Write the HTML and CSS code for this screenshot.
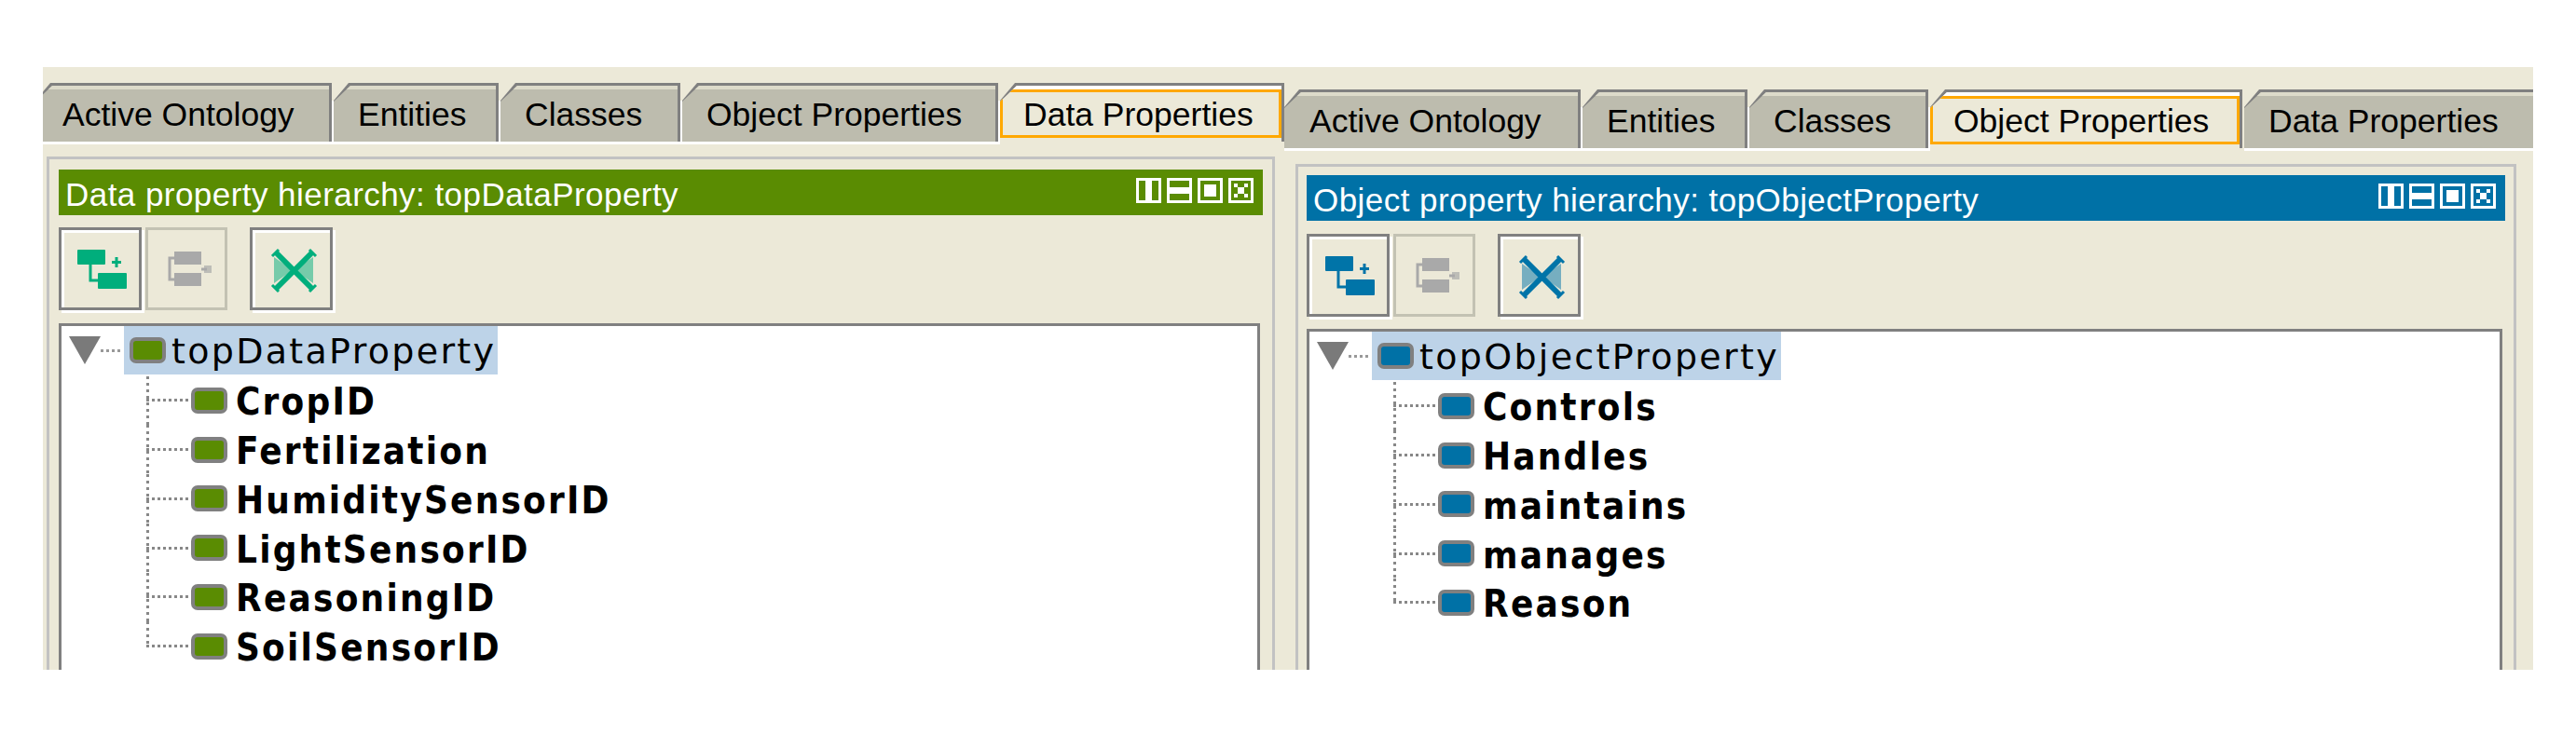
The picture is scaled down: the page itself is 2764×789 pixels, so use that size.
FILE: index.html
```html
<!DOCTYPE html>
<html>
<head>
	<meta charset="utf-8">
	<title>Ontology property hierarchies</title>
	<link rel="stylesheet" href="styles.css">
</head>
<body>

<div class="window">

	<section class="view view-data">
		<div class="tabs">
			<div class="tab"><div class="tab-face"><span class="tab-label">Active Ontology</span></div></div>
			<div class="tab"><div class="tab-face"><span class="tab-label">Entities</span></div></div>
			<div class="tab"><div class="tab-face"><span class="tab-label">Classes</span></div></div>
			<div class="tab"><div class="tab-face"><span class="tab-label">Object Properties</span></div></div>
			<div class="tab tab-active"><div class="tab-face"><span class="tab-label">Data Properties</span></div></div>
		</div>
		<div class="panel">
			<div class="title-bar">
				<span class="title-text">Data property hierarchy: topDataProperty</span>
				<div class="title-icons">
					<svg class="title-icon" viewBox="0 0 27 27"><path d="M1.500 1.500h24v24h-24z" fill="none" stroke="#fff" stroke-width="3"/><rect x="10" y="1" width="7" height="25" fill="#fff"/></svg>
					<svg class="title-icon" viewBox="0 0 27 27"><path d="M1.500 1.500h24v24h-24z" fill="none" stroke="#fff" stroke-width="3"/><rect x="1" y="10" width="25" height="7" fill="#fff"/></svg>
					<svg class="title-icon" viewBox="0 0 27 27"><path d="M1.500 1.500h24v24h-24z" fill="none" stroke="#fff" stroke-width="3"/><rect x="7" y="7" width="13" height="13" fill="#fff"/></svg>
					<svg class="title-icon" viewBox="0 0 27 27"><path d="M1.500 1.500h24v24h-24z" fill="none" stroke="#fff" stroke-width="3"/><path d="M6 6h4v4H6z M17 6h4v4h-4z M6 17h4v4H6z M17 17h4v4h-4z M10 10h7v7h-7z" fill="#fff"/></svg>
				</div>
			</div>
			<div class="toolbar">
				<button class="tool" type="button">
					<svg viewBox="0 0 83 83"><rect x="17" y="21" width="30" height="16" rx="1"/><path d="M31 37v17h9" fill="none" stroke="currentColor" stroke-width="3"/><rect x="39" y="46" width="31" height="17" rx="1"/><path d="M59 29v11M54 34.500h10" fill="none" stroke="currentColor" stroke-width="3"/></svg>
				</button>
				<button class="tool tool-disabled" type="button">
					<svg viewBox="0 0 83 83"><rect x="28" y="23" width="29" height="14"/><rect x="28" y="46" width="29" height="14"/><path d="M28 30h-5v23h5M57 42h6" fill="none" stroke="currentColor" stroke-width="3"/><rect x="60" y="38" width="8" height="8" opacity=".7"/></svg>
				</button>
				<button class="tool" type="button">
					<svg viewBox="0 0 83 83"><path d="M23 29l20 14-20 14z M65 29L45 43l20 14z" opacity=".5"/><path d="M25 24l39 39M64 24L25 63" fill="none" stroke="currentColor" stroke-width="6"/><path d="M21 28l7-7M61 21l7 7M21 59l7 7M61 66l7-7" fill="none" stroke="currentColor" stroke-width="3"/></svg>
				</button>
			</div>
			<div class="tree">
				<div class="tree-root">
					<svg class="twisty" viewBox="0 0 34 30"><path d="M0 0h34L17 30z"/></svg>
					<span class="twisty-dots"></span>
					<span class="root-sel"><span class="node"></span><span class="root-name">topDataProperty</span></span>
				</div>
				<div class="tree-row"><span class="elbow"></span><span class="node"></span><span class="row-name">CropID</span></div>
				<div class="tree-row"><span class="elbow"></span><span class="node"></span><span class="row-name">Fertilization</span></div>
				<div class="tree-row"><span class="elbow"></span><span class="node"></span><span class="row-name">HumiditySensorID</span></div>
				<div class="tree-row"><span class="elbow"></span><span class="node"></span><span class="row-name">LightSensorID</span></div>
				<div class="tree-row"><span class="elbow"></span><span class="node"></span><span class="row-name">ReasoningID</span></div>
				<div class="tree-row"><span class="elbow"></span><span class="node"></span><span class="row-name">SoilSensorID</span></div>
			</div>
		</div>
	</section>

	<section class="view view-object">
		<div class="tabs">
			<div class="tab"><div class="tab-face"><span class="tab-label">Active Ontology</span></div></div>
			<div class="tab"><div class="tab-face"><span class="tab-label">Entities</span></div></div>
			<div class="tab"><div class="tab-face"><span class="tab-label">Classes</span></div></div>
			<div class="tab tab-active"><div class="tab-face"><span class="tab-label">Object Properties</span></div></div>
			<div class="tab"><div class="tab-face"><span class="tab-label">Data Properties</span></div></div>
		</div>
		<div class="panel">
			<div class="title-bar">
				<span class="title-text">Object property hierarchy: topObjectProperty</span>
				<div class="title-icons">
					<svg class="title-icon" viewBox="0 0 27 27"><path d="M1.500 1.500h24v24h-24z" fill="none" stroke="#fff" stroke-width="3"/><rect x="10" y="1" width="7" height="25" fill="#fff"/></svg>
					<svg class="title-icon" viewBox="0 0 27 27"><path d="M1.500 1.500h24v24h-24z" fill="none" stroke="#fff" stroke-width="3"/><rect x="1" y="10" width="25" height="7" fill="#fff"/></svg>
					<svg class="title-icon" viewBox="0 0 27 27"><path d="M1.500 1.500h24v24h-24z" fill="none" stroke="#fff" stroke-width="3"/><rect x="7" y="7" width="13" height="13" fill="#fff"/></svg>
					<svg class="title-icon" viewBox="0 0 27 27"><path d="M1.500 1.500h24v24h-24z" fill="none" stroke="#fff" stroke-width="3"/><path d="M6 6h4v4H6z M17 6h4v4h-4z M6 17h4v4H6z M17 17h4v4h-4z M10 10h7v7h-7z" fill="#fff"/></svg>
				</div>
			</div>
			<div class="toolbar">
				<button class="tool" type="button">
					<svg viewBox="0 0 83 83"><rect x="17" y="21" width="30" height="16" rx="1"/><path d="M31 37v17h9" fill="none" stroke="currentColor" stroke-width="3"/><rect x="39" y="46" width="31" height="17" rx="1"/><path d="M59 29v11M54 34.500h10" fill="none" stroke="currentColor" stroke-width="3"/></svg>
				</button>
				<button class="tool tool-disabled" type="button">
					<svg viewBox="0 0 83 83"><rect x="28" y="23" width="29" height="14"/><rect x="28" y="46" width="29" height="14"/><path d="M28 30h-5v23h5M57 42h6" fill="none" stroke="currentColor" stroke-width="3"/><rect x="60" y="38" width="8" height="8" opacity=".7"/></svg>
				</button>
				<button class="tool" type="button">
					<svg viewBox="0 0 83 83"><path d="M23 29l20 14-20 14z M65 29L45 43l20 14z" opacity=".5"/><path d="M25 24l39 39M64 24L25 63" fill="none" stroke="currentColor" stroke-width="6"/><path d="M21 28l7-7M61 21l7 7M21 59l7 7M61 66l7-7" fill="none" stroke="currentColor" stroke-width="3"/></svg>
				</button>
			</div>
			<div class="tree">
				<div class="tree-root">
					<svg class="twisty" viewBox="0 0 34 30"><path d="M0 0h34L17 30z"/></svg>
					<span class="twisty-dots"></span>
					<span class="root-sel"><span class="node"></span><span class="root-name">topObjectProperty</span></span>
				</div>
				<div class="tree-row"><span class="elbow"></span><span class="node"></span><span class="row-name">Controls</span></div>
				<div class="tree-row"><span class="elbow"></span><span class="node"></span><span class="row-name">Handles</span></div>
				<div class="tree-row"><span class="elbow"></span><span class="node"></span><span class="row-name">maintains</span></div>
				<div class="tree-row"><span class="elbow"></span><span class="node"></span><span class="row-name">manages</span></div>
				<div class="tree-row"><span class="elbow"></span><span class="node"></span><span class="row-name">Reason</span></div>
			</div>
		</div>
	</section>

</div>

</body>
</html>
```

FILE: styles.css
```css
body {
	margin: 0;
	background: #fff;
}

.window {
	display: flex;
	width: 2672px;
	height: 647px;
	margin: 72px 0 0 46px;
	background: #ece9d8;
	overflow: hidden;
}

.view {
	display: flex;
	flex-direction: column;
	flex: none;
	box-sizing: border-box;
	width: 1336px;
}

.view-data {
	padding: 17px 14px 0 4px;
	--accent: #5a8c02;
	--icon: #00ae7c;
}

.view-object {
	padding: 24px 18px 0 8px;
	--accent: #0071a6;
	--icon: #0074a8;
}

/* tab strip */
.tabs {
	display: grid;
	height: 66px;
	flex: none;
	margin-left: -12px;
}

.view-data .tabs {
	grid-template-columns: 320px 179px 195px 341px 307px;
}

.view-object .tabs {
	grid-template-columns: 320px 179px 194px 337px 320px;
}

.tab {
	box-sizing: border-box;
	height: 66px;
	padding: 3px 5px 3px 0;
	background:
		linear-gradient(#808080, #808080) 0 0 / calc(100% - 2px) 63px no-repeat,
		linear-gradient(#fff, #fff) 0 63px / 100% 3px no-repeat,
		linear-gradient(#fff, #fff) 100% 19px / 2px 47px no-repeat;
	clip-path: polygon(16px 0, 100% 0, 100% 100%, 0 100%, 0 19px);
}

.tab-face {
	box-sizing: border-box;
	height: 60px;
	border-top: 4px solid #dddbca;
	background: #bdbcae;
	clip-path: polygon(18px 0, 100% 0, 100% 100%, 0 100%, 0 17px);
}

.tab-label {
	display: flex;
	align-items: center;
	box-sizing: border-box;
	height: 52px;
	padding: 2px 0 0 26px;
	border: 3px solid transparent;
	border-left: 0;
	font-family: "Liberation Sans", sans-serif;
	font-size: 35.5px;
	white-space: nowrap;
	color: #000;
}

.tab:first-child .tab-label {
	padding-left: 29px;
}

.view-object .tab:first-child .tab-label {
	padding-left: 27px;
}

.tab-active {
	background: linear-gradient(#808080, #808080) 0 0 / calc(100% - 2px) 63px no-repeat;
}

.tab-active .tab-face {
	border-top-color: #fff;
	background: #ece9d8;
}

.tab-active .tab-label {
	padding-left: 22px;
	border: 3px solid #ffa800;
}

/* hierarchy panel */
.panel {
	display: flex;
	flex-direction: column;
	flex: 1;
	min-height: 0;
	margin-top: 13px;
	padding: 11px 10px 0 10px;
	border: 3px solid #c2c2c2;
	border-bottom: 0;
}

.view-object .panel {
	margin-top: 14px;
	padding: 9px 9px 0 9px;
}

.title-bar {
	display: flex;
	justify-content: space-between;
	flex: none;
	box-sizing: border-box;
	height: 49px;
	padding: 9px 10px 0 7px;
	background: var(--accent);
}

.title-text {
	margin-top: -2px;
	font-family: "Liberation Sans", sans-serif;
	font-size: 35px;
	letter-spacing: 0.45px;
	line-height: 40px;
	white-space: nowrap;
	color: #fff;
}

.title-icons {
	display: flex;
	gap: 6px;
}

.title-icon {
	display: block;
	width: 27px;
	height: 27px;
}

.toolbar {
	display: flex;
	flex: none;
	margin: 13px 0 14px;
}

.view-object .toolbar {
	margin: 14px 0 13px;
}

.tool {
	display: block;
	box-sizing: border-box;
	width: 89px;
	height: 89px;
	margin-right: 4px;
	padding: 0;
	border: 3px solid #808080;
	background: #ece9d8;
	box-shadow: inset 3px 3px 0 #fff, 3px 3px 0 #fff;
	color: var(--icon);
}

.tool svg {
	display: block;
	width: 83px;
	height: 83px;
	fill: currentColor;
}

.tool-disabled {
	width: 88px;
	margin-right: 24px;
	border-color: #c3c2b3;
	box-shadow: none;
	color: #a9a9a9;
}

/* tree */
.tree {
	flex: 1;
	min-height: 0;
	margin-right: 3px;
	border: 3px solid #808080;
	border-bottom: 0;
	background: #fff;
}

.tree-root {
	display: flex;
	align-items: center;
	height: 52px;
	margin-bottom: 1.5px;
	padding-left: 8px;
}

.twisty {
	flex: none;
	width: 34px;
	height: 30px;
	fill: #7a7a7a;
}

.twisty-dots {
	flex: none;
	width: 24px;
	height: 3px;
	margin-right: 1px;
	background: repeating-linear-gradient(to right, #999 0 3px, transparent 3px 6px);
}

.root-sel {
	display: flex;
	align-items: center;
	align-self: stretch;
	padding: 0 2px 0 6px;
	background: #bdd3e8;
}

.node {
	flex: none;
	box-sizing: border-box;
	width: 39px;
	height: 28px;
	border: 4px solid #808080;
	border-radius: 7px;
	background: var(--accent);
}

.root-name,
.row-name {
	font-family: "DejaVu Sans", sans-serif;
	font-size: 38px;
	line-height: 52px;
	white-space: nowrap;
	color: #000;
}

.root-name {
	margin: 2px 0 0 6px;
	letter-spacing: 2.3px;
}

.row-name {
	margin: 3px 0 0 9px;
	font-family: "DejaVu Sans Condensed", "DejaVu Sans", sans-serif;
	font-size: 40px;
	font-weight: 700;
	letter-spacing: 2.2px;
}

.tree-row {
	display: flex;
	align-items: center;
	height: 52.75px;
	margin-left: 91px;
}

.view-object .tree-row {
	margin-left: 90px;
}

.elbow {
	flex: none;
	align-self: stretch;
	width: 48px;
	background:
		repeating-linear-gradient(to right, #888 0 3px, transparent 3px 6px) 0 50% / 46px 3px no-repeat,
		repeating-linear-gradient(to bottom, #888 0 3px, transparent 3px 7px) 0 0 / 3px 100% no-repeat;
}

.tree-row:last-child .elbow {
	background-size: 46px 3px, 3px 50%;
}
```
